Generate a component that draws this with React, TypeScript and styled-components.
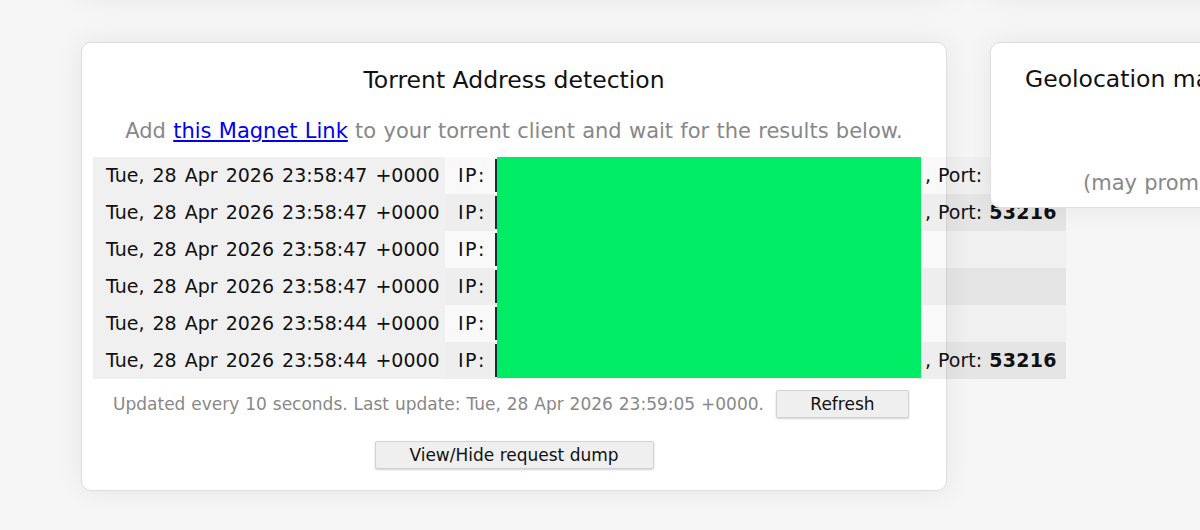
import React from "react";
import styled, { createGlobalStyle } from "styled-components";

const GlobalStyle = createGlobalStyle`
  html, body { margin: 0; padding: 0; }
  body {
    background: #f6f6f6;
    font-family: "DejaVu Sans", Verdana, sans-serif;
    color: #111;
  }
`;

const Page = styled.div`
  width: 1200px;
  height: 530px;
  overflow: hidden;
  padding-left: 81px;
  box-sizing: border-box;
  display: flex;
  flex-direction: column;
`;

const CardRow = styled.div<{ $offset: number }>`
  display: flex;
  align-items: flex-start;
  gap: 43px;
  margin-top: ${(p) => p.$offset}px;
`;

const Card = styled.div<{ $width: number; $height: number }>`
  flex-shrink: 0;
  width: ${(p) => p.$width}px;
  height: ${(p) => p.$height}px;
  box-sizing: border-box;
  background: #fff;
  border: 1px solid #dedede;
  border-radius: 10px;
  box-shadow: 0 0 28px rgba(0, 0, 0, 0.07);
`;

const GhostCard = styled(Card)`
  box-shadow: 0 0 36px rgba(0, 0, 0, 0.13);
`;

const MainCard = styled(Card)`
  padding: 24px 11px 0;
  display: flex;
  flex-direction: column;
  align-items: center;
`;

const SideCard = styled(Card)`
  position: relative;
  z-index: 2;
  padding: 23px 0 0 34px;
`;

const Title = styled.h2`
  margin: 0;
  font-size: 23.5px;
  line-height: 26px;
  font-weight: normal;
  color: #111;
  white-space: nowrap;
`;

const Lead = styled.p<{ $indent?: number; $gap?: number }>`
  margin: ${(p) => p.$gap ?? 25}px 0 0 ${(p) => p.$indent ?? 0}px;
  font-size: 21px;
  line-height: 26px;
  word-spacing: 0.6px;
  color: #888;
  white-space: nowrap;
`;

const MagnetLink = styled.a`
  color: #0000ee;
  text-decoration: underline;
`;

const Table = styled.div`
  position: relative;
  align-self: flex-start;
  margin-top: 13px;
  width: 973px;
  flex-shrink: 0;
`;

const Row = styled.div<{ $odd: boolean }>`
  display: grid;
  grid-template-columns: 352px 50px 430px 141px;
  height: 37px;
  background: ${(p) => (p.$odd ? "rgba(0,0,0,0.025)" : "rgba(0,0,0,0.065)")};
  font-size: 19px;
  line-height: 37px;
  color: #111;
  white-space: nowrap;
`;

const DateCell = styled.div`
  background: #f0f0f0;
  padding-left: 13px;
  word-spacing: 2px;
`;

const LabelCell = styled.div`
  padding-left: 13px;
  letter-spacing: 1.5px;
`;

const ValueCell = styled.div`
  position: relative;
  &::before {
    content: "";
    position: absolute;
    left: 0;
    top: 2px;
    bottom: 2px;
    width: 3px;
    background: #1b2a38;
  }
`;

const PortCell = styled.div`
  word-spacing: 1px;
  b {
    font-weight: bold;
    letter-spacing: 0.3px;
  }
`;

const Redaction = styled.div`
  position: absolute;
  left: 404px;
  top: 0;
  width: 424px;
  height: 221px;
  background: #00ec64;
`;

const StatusLine = styled.div`
  display: flex;
  align-items: center;
  gap: 12px;
  margin-top: 11px;
  margin-right: 6px;
`;

const StatusText = styled.span`
  font-size: 17px;
  word-spacing: 0.5px;
  color: #888;
  white-space: nowrap;
`;

const Button = styled.button<{ $width: number }>`
  width: ${(p) => p.$width}px;
  height: 28px;
  padding: 0;
  font-family: "DejaVu Sans", Verdana, sans-serif;
  font-size: 17px;
  color: #111;
  background: #efefef;
  border: 1px solid #d2d2d2;
  border-radius: 2px;
  box-shadow: 0 1px 2px rgba(0, 0, 0, 0.18);
  cursor: pointer;
`;

const DumpButton = styled(Button)`
  margin-top: 23px;
`;

const rows = [
  { date: "Tue, 28 Apr 2026 23:58:47 +0000", port: "53216" },
  { date: "Tue, 28 Apr 2026 23:58:47 +0000", port: "53216" },
  { date: "Tue, 28 Apr 2026 23:58:47 +0000", port: "" },
  { date: "Tue, 28 Apr 2026 23:58:47 +0000", port: "" },
  { date: "Tue, 28 Apr 2026 23:58:44 +0000", port: "" },
  { date: "Tue, 28 Apr 2026 23:58:44 +0000", port: "53216" },
];

export default function App() {
  return (
    <>
      <GlobalStyle />
      <Page>
        <CardRow $offset={-212}>
          <GhostCard $width={866} $height={200} />
          <GhostCard $width={420} $height={200} />
        </CardRow>
        <CardRow $offset={54}>
          <MainCard $width={866} $height={449}>
            <Title>Torrent Address detection</Title>
            <Lead>
              Add <MagnetLink href="#">this Magnet Link</MagnetLink> to your torrent client and wait for the results below.
            </Lead>
            <Table>
              {rows.map((r, i) => (
                <Row key={i} $odd={i % 2 === 0}>
                  <DateCell>{r.date}</DateCell>
                  <LabelCell>IP:</LabelCell>
                  <ValueCell />
                  <PortCell>
                    {i === 0 ? ", Port: " : r.port ? (
                      <>
                        , Port: <b>{r.port}</b>
                      </>
                    ) : null}
                  </PortCell>
                </Row>
              ))}
              <Redaction />
            </Table>
            <StatusLine>
              <StatusText>Updated every 10 seconds. Last update: Tue, 28 Apr 2026 23:59:05 +0000.</StatusText>
              <Button $width={133}>Refresh</Button>
            </StatusLine>
            <DumpButton $width={279}>View/Hide request dump</DumpButton>
          </MainCard>
          <SideCard $width={420} $height={166}>
            <Title>Geolocation map</Title>
            <Lead $indent={58} $gap={78}>(may prompt)</Lead>
          </SideCard>
        </CardRow>
      </Page>
    </>
  );
}
